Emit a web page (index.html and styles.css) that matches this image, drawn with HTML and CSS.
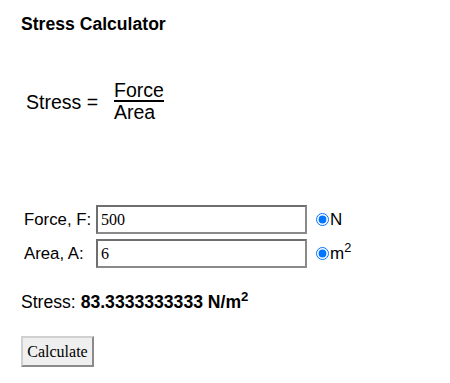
FILE: index.html
```html
<!DOCTYPE html>
<html lang="en">
  <head>
    <meta charset="UTF-8" />
    <title>Stress Calculator</title>
    <link rel="stylesheet" href="styles.css">
  </head>
  <body>
    <div class="page">
      <h1 class="title">Stress Calculator</h1>

      <div class="formula">
        <span class="lhs">Stress =</span>
        <span class="frac">
          <span class="num">Force</span>
          <span class="den">Area</span>
        </span>
      </div>

      <form class="calc">
        <div class="row">
          <label class="lbl" for="force">Force, F:</label>
          <input class="field" type="text" id="force" value="500" />
          <label class="unit"><input type="radio" name="fu" checked /><span>N</span></label>
        </div>
        <div class="row">
          <label class="lbl" for="area">Area, A:</label>
          <input class="field" type="text" id="area" value="6" />
          <label class="unit"><input type="radio" name="au" checked /><span>m<sup>2</sup></span></label>
        </div>
      </form>

      <p class="result">Stress: <b>83.3333333333 N/m<sup>2</sup></b></p>

      <button class="btn">Calculate</button>
    </div>
  </body>
</html>
```

FILE: styles.css
```css
* {
  margin: 0;
  padding: 0;
  box-sizing: border-box;
}
body {
  font-family: 'Liberation Sans', Arial, sans-serif;
  background: #fff;
  color: #000;
}

.page {
  padding: 14px 0 0 21px;
}

.title {
  font-size: 17.6px;
  font-weight: bold;
  line-height: 20px;
}

.formula {
  display: flex;
  align-items: center;
  margin-top: 47px;
  padding-left: 5px;
  font-size: 19.5px;
}
.lhs {
  width: 88px;
}
.frac {
  display: flex;
  flex-direction: column;
  line-height: 21px;
}
.num {
  border-bottom: 2px solid #000;
  line-height: 19px;
}

.calc {
  margin-top: 82px;
  padding-left: 3px;
}
.row {
  display: flex;
  align-items: center;
  height: 29px;
  margin-bottom: 5px;
  font-size: 16.8px;
}
.lbl {
  width: 72px;
}
.field {
  width: 211px;
  height: 29px;
  border: 2px solid #8a8a8a;
  border-top-color: #6f6f6f;
  border-left-color: #6f6f6f;
  padding: 0 3px;
  font-family: 'Liberation Serif', 'Times New Roman', serif;
  font-size: 16px;
  outline: none;
}
.unit {
  display: flex;
  align-items: center;
  margin-left: 7px;
  font-size: 17px;
}
.unit input {
  width: 13px;
  height: 13px;
  margin: 0 1px 0 2px;
  accent-color: #0075ff;
}
sup {
  font-size: 0.75em;
  line-height: 0;
}

.result {
  margin-top: 24px;
  font-size: 17.6px;
}

.btn {
  margin-top: 23px;
  width: 73px;
  height: 31px;
  font-family: 'Liberation Serif', 'Times New Roman', serif;
  font-size: 16px;
  background: #efefef;
  border: 2px solid #8a8a8a;
  border-top-color: #d0d0d0;
  border-left-color: #d0d0d0;
  color: #000;
}
```
